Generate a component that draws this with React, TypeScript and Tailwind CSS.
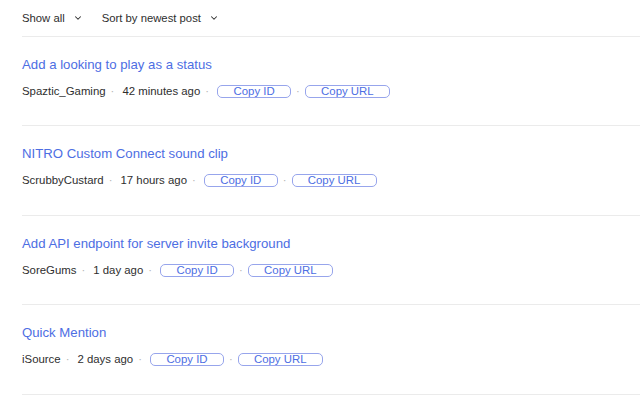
import { ChevronDown } from 'lucide-react';

interface Post {
  title: string;
  author: string;
  time: string;
}

const posts: Post[] = [
  { title: 'Add a looking to play as a status', author: 'Spaztic_Gaming', time: '42 minutes ago' },
  { title: 'NITRO Custom Connect sound clip', author: 'ScrubbyCustard', time: '17 hours ago' },
  { title: 'Add API endpoint for server invite background', author: 'SoreGums', time: '1 day ago' },
  { title: 'Quick Mention', author: 'iSource', time: '2 days ago' },
];

export default function App() {
  return (
    <div className="min-h-screen bg-white pl-[22px] font-['Liberation_Sans',Arial,sans-serif] text-[#2e2e2e]">
      {/* Filters */}
      <div className="flex h-[37px] items-center border-b border-[#ebebeb] text-[11.3px]">
        <button className="flex items-center gap-[8px]">
          Show all
          <ChevronDown className="h-[10px] w-[10px]" strokeWidth={2.5} />
        </button>
        <button className="ml-[19px] flex items-center gap-[8px]">
          Sort by newest post
          <ChevronDown className="h-[10px] w-[10px]" strokeWidth={2.5} />
        </button>
      </div>

      {/* Posts */}
      {posts.map((post, i) => (
        <div
          key={post.title}
          className={`border-b border-[#ebebeb] pt-[20px] ${i % 2 === 0 ? 'h-[89px]' : 'h-[90px]'}`}
        >
          <a className="block text-[13.2px] leading-[16px] text-[#4d6ee3]">{post.title}</a>
          <div className="mt-[12px] flex items-center text-[11.4px] leading-[13px]">
            <span>{post.author}</span>
            <span className="ml-[5px] mr-[8px] text-[#b5b5b5]">·</span>
            <span>{post.time}</span>
            <span className="ml-[5px] mr-[8px] text-[#b5b5b5]">·</span>
            <button className="h-[13px] w-[74px] rounded-[5px] border border-[#97a5ec] text-[11.4px] leading-[11px] text-[#4d6ee3]">
              Copy ID
            </button>
            <span className="mx-[5px] text-[#b5b5b5]">·</span>
            <button className="h-[13px] w-[85px] rounded-[5px] border border-[#97a5ec] text-[11.4px] leading-[11px] text-[#4d6ee3]">
              Copy URL
            </button>
          </div>
        </div>
      ))}
    </div>
  );
}
